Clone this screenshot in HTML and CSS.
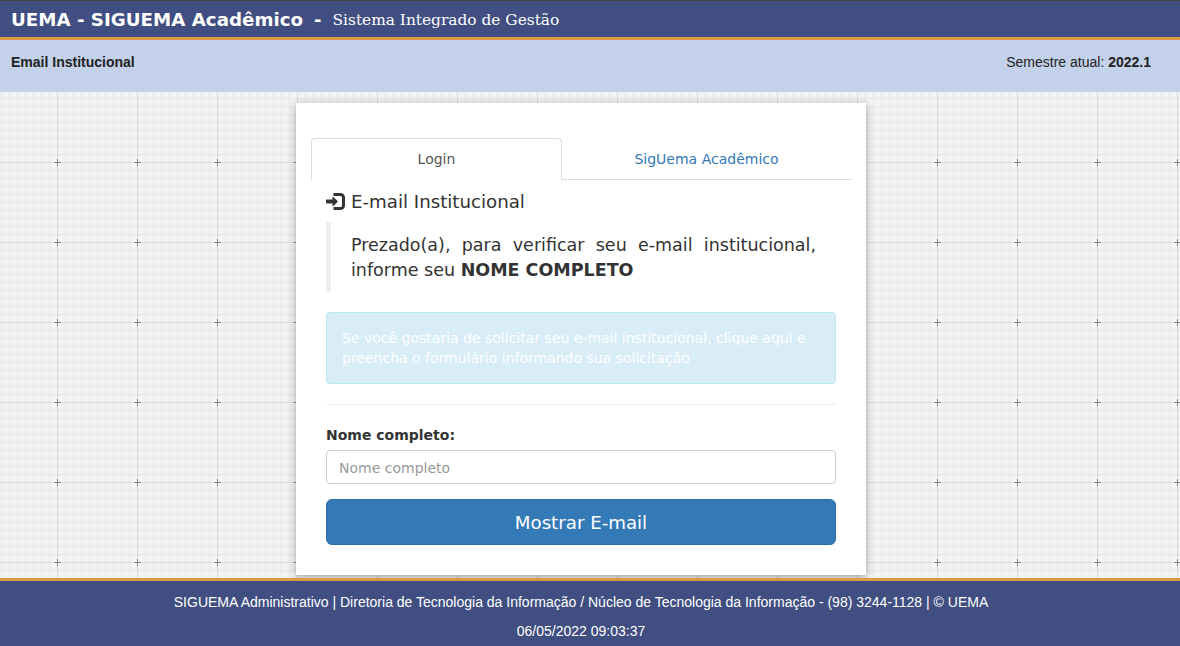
FILE: index.html
```html
<!DOCTYPE html>
<html lang="pt-BR">
<head>
    <meta charset="UTF-8">
    <title>UEMA - SIGUEMA Acadêmico</title>
    <link rel="stylesheet" href="styles.css">
</head>
<body>

<header class="topbar">
    <span class="brand">UEMA - SIGUEMA Acadêmico</span>
    <span class="brandDash">-</span>
    <span class="brandSub">Sistema Integrado de Gestão</span>
</header>

<div class="infobar">
    <strong>Email Institucional</strong>
    <span>Semestre atual: <strong>2022.1</strong></span>
</div>

<main class="content">
    <section class="card">
        <div class="tabs">
            <a class="tab active">Login</a>
            <a class="tab">SigUema Acadêmico</a>
        </div>
        <div class="panel">
            <h4 class="panelTitle">
                <svg class="loginIcon" viewBox="0 0 20 17" width="20" height="17">
                    <path d="M.8 6.600H6.500V4.300a.5.5 0 0 1 .85-.35L11.500 8a.7.7 0 0 1 0 1L7.350 13.050a.5.5 0 0 1-.85-.35V10.400H.8a.8.8 0 0 1-.8-.8V7.400a.8.8 0 0 1 .8-.8z" fill="#333"/>
                    <path d="M7.500 1.500h7a3 3 0 0 1 3 3v8a3 3 0 0 1-3 3h-7" fill="none" stroke="#333" stroke-width="3"/>
                </svg>
                E-mail Institucional
            </h4>
            <blockquote class="quote">
                Prezado(a), para verificar seu e-mail institucional, informe seu <strong>NOME COMPLETO</strong>
            </blockquote>
            <div class="alert">Se você gostaria de solicitar seu e-mail institucional, clique aqui e preencha o formulário informando sua solicitação</div>
            <hr class="divider">
            <label class="fieldLabel" for="nome">Nome completo:</label>
            <input class="field" id="nome" type="text" placeholder="Nome completo">
            <button class="submit">Mostrar E-mail</button>
        </div>
    </section>
</main>

<footer class="bottombar">
    <p>SIGUEMA Administrativo | Diretoria de Tecnologia da Informação / Núcleo de Tecnologia da Informação - (98) 3244-1128 | © UEMA</p>
    <p>06/05/2022 09:03:37</p>
</footer>

</body>
</html>
```

FILE: styles.css
```css
* {
    box-sizing: border-box;
}

html, body {
    height: 646px;
}

body {
    margin: 0;
    display: flex;
    flex-direction: column;
    overflow: hidden;
    font-family: 'Liberation Sans', Arial, sans-serif;
    font-size: 14px;
    color: #333;
}

.topbar {
    height: 40px;
    padding: 1px 11px 0;
    display: flex;
    align-items: center;
    background-color: #404e81;
    border-top: 1px solid #444;
    border-bottom: 3px solid #dd9a40;
    color: #fff;
    font-family: 'DejaVu Sans', sans-serif;
    white-space: nowrap;
}

.brand {
    font-size: 18.250px;
    font-weight: 700;
}

.brandDash {
    margin: 0 11px;
    font-size: 18px;
    font-weight: 700;
}

.brandSub {
    font-family: 'DejaVu Serif', serif;
    font-size: 15.400px;
}

.infobar {
    height: 52px;
    padding: 14px 29px 0 11px;
    display: flex;
    justify-content: space-between;
    background-color: #c3d1ea;
    color: #222;
}

/* grid tile: 8px minor lines, 80px major lines with a small cross */
.content {
    flex: 1;
    min-height: 0;
    display: flex;
    justify-content: center;
    padding: 11px 18px 0 0;
    background-color: #f3f3f3;
    background-image: url("data:image/svg+xml,%3Csvg xmlns='http://www.w3.org/2000/svg' width='80' height='80' shape-rendering='crispEdges'%3E%3Cdefs%3E%3Cpattern id='g' width='8' height='8' patternUnits='userSpaceOnUse'%3E%3Cpath d='M2 0h1v8H2zM0 7h8v1H0z' fill='%23f0f0f0'/%3E%3Cpath d='M1 0h1v8H1zM0 6h8v1H0z' fill='%23e7e7e7'/%3E%3C/pattern%3E%3C/defs%3E%3Crect width='80' height='80' fill='url(%23g)'/%3E%3Cpath d='M57 0h1v80h-1zM0 70h80v1H0z' fill='%23dadada'/%3E%3Cpath d='M53 66h9v9h-9z' fill='%23f8f8f8'/%3E%3Cpath d='M57 67h1v7h-1zM54 70h7v1h-7z' fill='%23808080'/%3E%3C/svg%3E");
}

.card {
    width: 570px;
    height: 472px;
    padding: 35px 15px 0;
    background-color: #fff;
    box-shadow: 0 2px 8px rgba(0, 0, 0, 0.35);
}

.tabs {
    display: flex;
    height: 42px;
    border-bottom: 1px solid #ddd;
    font-family: 'DejaVu Sans', sans-serif;
}

.tab {
    flex: 1;
    height: 42px;
    line-height: 41px;
    text-align: center;
    color: #337ab7;
    border: 1px solid transparent;
    border-radius: 4px 4px 0 0;
}

.tab.active {
    flex: 0 0 251px;
    color: #555;
    background-color: #fff;
    border-color: #ddd #ddd #fff;
}

.panel {
    padding: 0 15px;
    font-family: 'DejaVu Sans', sans-serif;
}

.panelTitle {
    margin: 10px 0;
    height: 22px;
    display: flex;
    align-items: center;
    gap: 5px;
    font-size: 18.200px;
    font-weight: 400;
    color: #333;
}

.quote {
    margin: 0 0 20px;
    padding: 11px 20px 9px;
    border-left: 5px solid #eee;
    font-size: 17.500px;
    line-height: 25px;
    text-align: justify;
}

.alert {
    height: 72px;
    padding: 15px;
    background-color: #d9edf7;
    border: 1px solid #bce8f1;
    border-radius: 4px;
    color: #fff;
    line-height: 20px;
}

.divider {
    margin: 20px 0;
    border: 0;
    border-top: 1px solid #eee;
}

.fieldLabel {
    display: block;
    margin-bottom: 5px;
    font-weight: 700;
    line-height: 20px;
}

.field {
    display: block;
    width: 100%;
    height: 34px;
    padding: 7px 12px 5px;
    font-family: inherit;
    font-size: 14px;
    color: #555;
    background-color: #fff;
    border: 1px solid #ccc;
    border-radius: 4px;
}

.field::placeholder {
    color: #999;
}

.submit {
    display: block;
    width: 100%;
    height: 46px;
    margin-top: 15px;
    font-family: inherit;
    font-size: 18.200px;
    color: #fff;
    background-color: #337ab7;
    border: 1px solid #2e6da4;
    border-radius: 6px;
}

.bottombar {
    height: 68px;
    padding: 11px 18px 0 0;
    background-color: #404e81;
    border-top: 3px solid #dd9a40;
    color: #fff;
    text-align: center;
}

.bottombar p {
    margin: 0 0 9px;
    line-height: 20px;
}
```
